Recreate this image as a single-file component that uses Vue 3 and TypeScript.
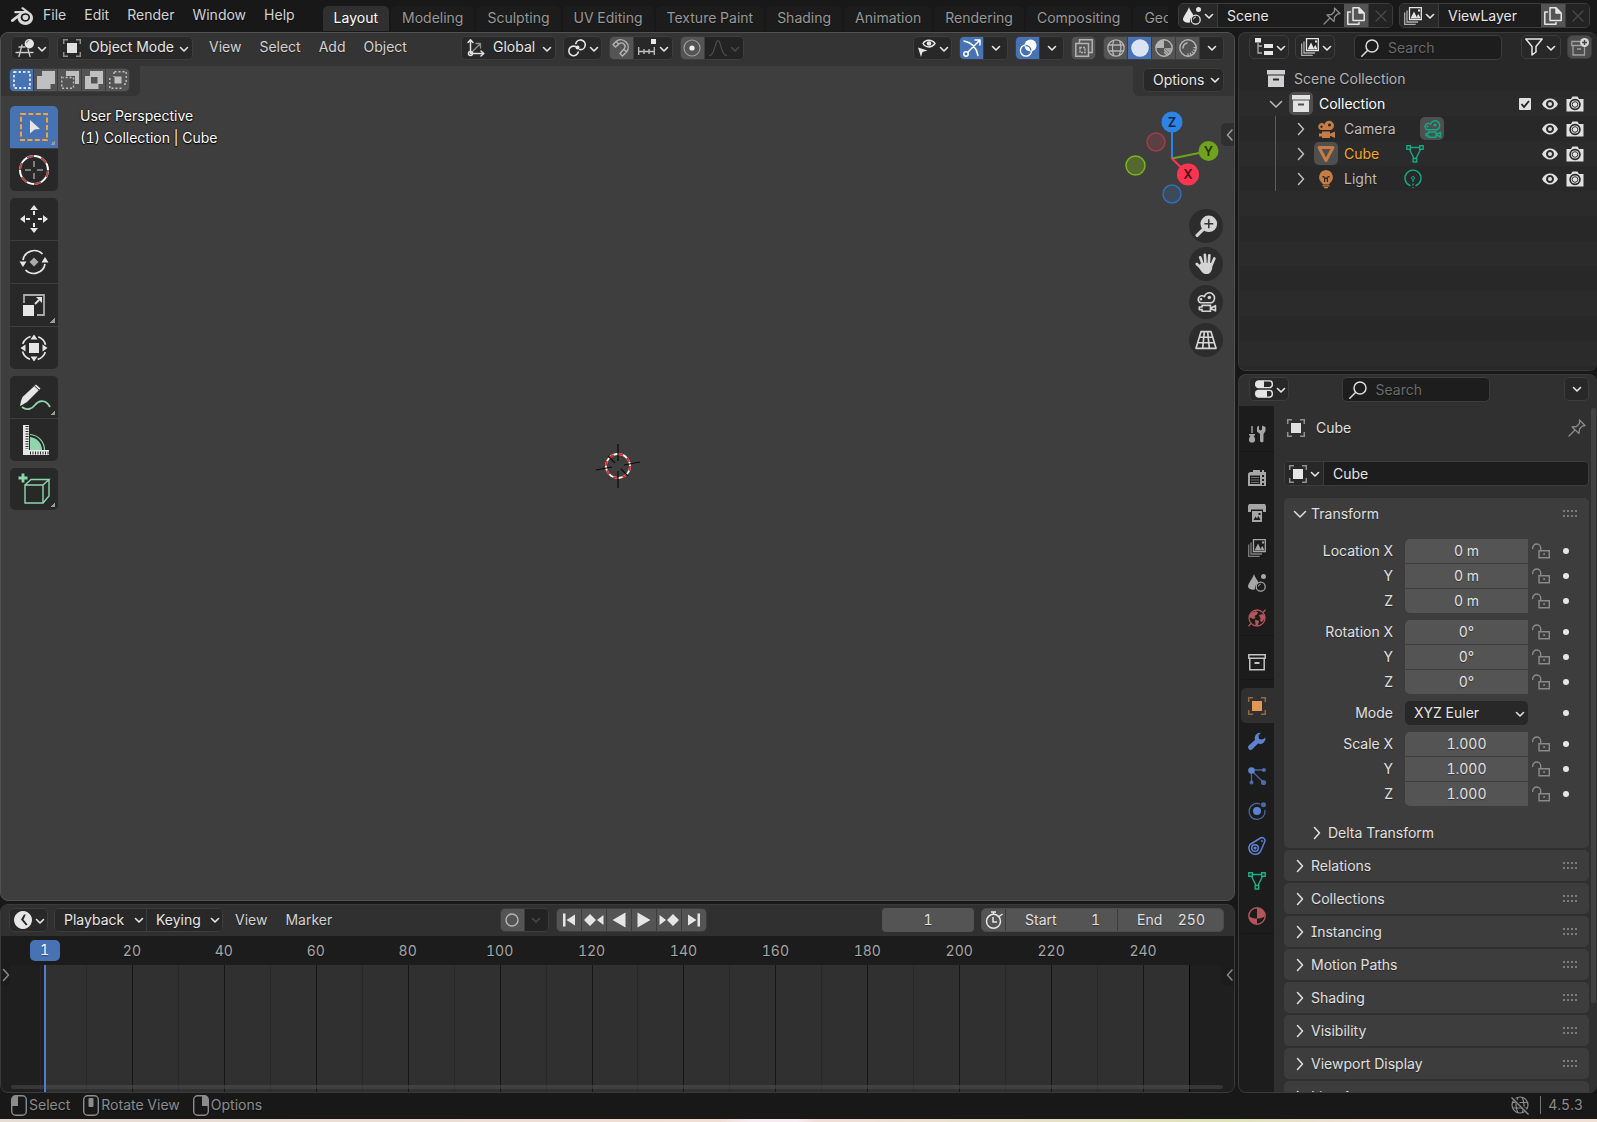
<script setup lang="ts">
import { h, ref, type FunctionalComponent } from 'vue'

const S = 'fill="none" stroke="currentColor" stroke-linecap="round" stroke-linejoin="round"'
const F = 'fill="currentColor"'

const icons: Record<string, string> = {
  logo: `<path transform="scale(.75) translate(0 -1)" ${F} d="M12.51 13.214c.046-.8.438-1.506 1.03-2.006a3.424 3.424 0 0 1 2.212-.79c.85 0 1.631.3 2.211.79.592.5.983 1.206 1.028 2.005.045.823-.285 1.586-.865 2.153a3.389 3.389 0 0 1-2.374.938 3.393 3.393 0 0 1-2.376-.938c-.58-.567-.91-1.33-.865-2.152M7.35 14.831c.006.314.106.922.256 1.398a7.372 7.372 0 0 0 1.593 2.757 8.227 8.227 0 0 0 2.787 2.001 8.947 8.947 0 0 0 3.66.76 8.964 8.964 0 0 0 3.657-.772 8.285 8.285 0 0 0 2.785-2.01 7.428 7.428 0 0 0 1.592-2.762 6.964 6.964 0 0 0 .25-3.074 7.123 7.123 0 0 0-1.016-2.779 7.764 7.764 0 0 0-1.852-2.043h.002L13.566 2.55l-.02-.015c-.492-.378-1.319-.376-1.86.002-.547.382-.609 1.015-.123 1.415l-.001.001 3.126 2.543-9.53.01h-.013c-.788.001-1.545.518-1.695 1.172-.154.665.38 1.217 1.2 1.22V8.9l4.83-.01-8.62 6.617-.034.025c-.813.622-1.075 1.658-.563 2.313.52.667 1.625.668 2.447.004L7.414 14s-.069.52-.063.831zm12.09 1.741c-.97.988-2.326 1.548-3.795 1.55-1.47.004-2.827-.552-3.797-1.538a4.51 4.51 0 0 1-1.036-1.622 4.282 4.282 0 0 1 .282-3.519 4.702 4.702 0 0 1 1.153-1.371c.942-.768 2.141-1.183 3.396-1.185 1.256-.002 2.455.41 3.398 1.175.48.391.87.854 1.152 1.367a4.28 4.28 0 0 1 .522 1.706 4.236 4.236 0 0 1-.239 1.811 4.54 4.54 0 0 1-1.035 1.626"/>`,
  view3d: `<g ${S} stroke-width="1.300" opacity=".85"><path d="M3 8h6M0 13.500h17M6 6 3 17.500M12 10l2 7.500"/></g><circle cx="13.300" cy="4.700" r="4.700" ${F}/><path d="M10.500 4a3 3 0 0 1 2.500-2.500" fill="none" stroke="#777" stroke-width="1"/>`,
  object: `<rect x="4" y="4" width="10" height="10" ${F}/><g fill="none" stroke="currentColor" stroke-width="1.500" opacity=".55"><path d="M.7 5V.7H5M13 .7h4.300V5M17.300 13v4.300H13M5 17.300H.7V13"/></g>`,
  axes: `<g ${S} stroke-width="1.500"><path d="M3.500 1v13.500H16M1 3.500 3.500.8 6 3.500M14 12l2.800 2.500L14 17"/><circle cx="3.500" cy="14.500" r="2"/></g><path ${S} opacity=".55" stroke-width="1.300" d="m5 13 8-8M9 4.500h4.500V9"/>`,
  pivot: `<g fill="none" stroke="currentColor" stroke-width="1.600" stroke-linecap="round"><path d="M7.500 7.500A4.800 4.800 0 1 0 10.300 13"/><path d="M7.800 4.500a4.800 4.800 0 1 1 3.700 6"/></g><circle cx="9.500" cy="8.500" r="2" ${F}/>`,
  magnet: `<path ${S} stroke-width="1.400" d="M1 5.500 4 2.500C11-3 20 6 14.500 13l-4 4-2.500-2.500 4-4.500c3-3.500-1.500-8-5-5L3.500 8ZM4 2.500 6.500 5M14.500 13 12 10.500"/>`,
  snapinc: `<rect x="13" y="0" width="5" height="5" ${F}/><g fill="none" stroke="currentColor" stroke-width="1.300" opacity=".8"><path d="M.7 8v8M16.300 8v8M0 12.500h17M6 10v5M11 10v5"/></g>`,
  prop: `<circle cx="9" cy="9" r="8" fill="none" stroke="currentColor" stroke-width="1.200" opacity=".5"/><circle cx="9" cy="9" r="2.600" fill="#eee"/>`,
  falloff: `<path ${S} stroke-width="1.300" d="M.7 16.500C6 16 6 1.500 9 1.500s3 14.500 8.300 15"/>`,
  eyearrow: `<path ${S} stroke-width="1.500" d="M5 4.500C7.500 0 14 0 17 4.500 14 9 7.500 9 5 4.500Z"/><circle cx="11" cy="4.500" r="2.300" ${F}/><path ${F} d="m0 8.500 9.500 3-5 1.500L3 18Z"/>`,
  gizmo: `<g ${S} stroke-width="1.500"><path d="M1 2c8 1.500 12.500 6.500 14 14.500M5 13 17 1M12 1h5v5"/><circle cx="3" cy="15" r="2.200"/></g>`,
  overlay: `<circle cx="11.500" cy="6.500" r="6" ${F}/><circle cx="7" cy="11.500" r="5.600" fill="none" stroke="currentColor" stroke-width="1.400"/><path d="M6.500 6.500a5.500 5.500 0 0 1 5.500 5" fill="none" stroke="#4772b3" stroke-width="1.300"/>`,
  xray: `<g fill="none" stroke="currentColor" stroke-width="1.500"><path d="M4.500 4V.8h12.700v12.700H14"/><path d="M.8 4.500h12.700v12.700H.8Z" /><path d="M5 8.500h5v5H5Z" stroke-dasharray="2 1"/></g>`,
  wire: `<g fill="none" stroke="currentColor" stroke-width="1.300"><circle cx="9" cy="9" r="8.200"/><path d="M1.500 6h15M1 12h16M7 1C5 5 5 13 7 17M12.500 1.500c2 5 1.500 11-.5 15"/></g>`,
  solid: `<circle cx="9" cy="9" r="8.800" ${F}/>`,
  matprev: `<circle cx="9" cy="9" r="8.200" fill="none" stroke="currentColor" stroke-width="1.400"/><path ${F} d="M9 9H1a8 8 0 0 1 8-8Z"/><path ${F} d="M9 9h8a8 8 0 0 1-2.500 5.500Z" opacity=".8"/><path d="m9 10.500 5 5M9 13l3.500 3.500" stroke="currentColor" stroke-width="1.300"/>`,
  rendered: `<circle cx="9" cy="9" r="8.200" fill="none" stroke="currentColor" stroke-width="1.400"/><path ${S} stroke-width="1.600" d="M4 9a5.500 5.500 0 0 1 4-5"/><path d="M16 8a8 8 0 0 1-8 8" fill="none" stroke="currentColor" stroke-width="3" stroke-dasharray="1.200 1.500"/>`,
  scene: `<path ${F} d="M6 0c1 4 4.500 7 4.500 9A6 6 0 0 0 7 15.500C3.500 16 0 15 0 12.500 0 9.500 4.500 5 6 0Z"/><circle cx="15.500" cy="2.500" r="2.500" ${F}/><circle cx="12.700" cy="12.700" r="4.500" fill="none" stroke="currentColor" stroke-width="1.300"/><path d="M10.500 12a2.500 2.500 0 0 1 2-2" ${S}/>`,
  layer: `<g fill="none" stroke="currentColor" stroke-width="1.300"><path d="M5.500.7h11.800v12H5.500Z"/><path d="M3 3.500V15h11M.7 5.500v11.800h11" opacity=".7"/></g><path ${F} d="M6.500 11.500 10 4.500l3.500 7ZM13 9l1.500-2 2 4.500h-3ZM14 2.500h2v2h-2Z"/>`,
  pin: `<path ${S} stroke-width="1.300" d="m11.500 1 5.500 5.500-2.500.5-3 3-.5 4.500L4 8l4.500-.5 3-3ZM7 11 1 17"/>`,
  copy: `<path ${S} stroke-width="1.500" d="M6 .8h6L17.200 6v7.500H6ZM12 .8V6h5.200M3.500 5H.8v12.200H12V15.500"/><path ${F} d="M12 1v5h5Z"/>`,
  close: `<path ${S} stroke-width="1.200" d="m4 4 10 10M14 4 4 14"/>`,
  outliner: `<path ${F} d="M0 0h6v4.500H0ZM9 6h9v4H9ZM9 13h9v4H9Z"/><path d="M3 5v10h4M3 8h4" fill="none" stroke="currentColor" stroke-width="1.300" opacity=".7"/>`,
  search: `<g ${S} stroke-width="1.500"><circle cx="11" cy="7" r="6"/><path d="M6.500 11.500.8 17.200"/></g>`,
  filter: `<path ${S} stroke-width="1.500" d="M.8 1h16.400L11 8.500V14l-4 3V8.500Z"/>`,
  newcol: `<path fill="none" stroke="currentColor" stroke-width="1.300" opacity=".6" d="M9 3.500H.8v4h10M2 7.500V17h11.500V9"/><path d="M6 11h4" stroke="currentColor" stroke-width="1.500" opacity=".6"/><circle cx="13.500" cy="4.500" r="4.500" ${F}/><path d="M13.500 2v5M11 4.500h5" stroke="#444" stroke-width="1.400"/>`,
  box: `<path ${F} fill-rule="evenodd" d="M0 0h18v4.500H0ZM1 5.500h16V17H1ZM6 8.500v2h6v-2Z"/>`,
  boxline: `<g fill="none" stroke="currentColor" stroke-width="1.500"><path d="M.8 1.800h16.400v3.500H.8ZM1.800 5.300h14.400v11.400H1.800Z"/></g><rect x="6.500" y="9" width="5" height="2" ${F}/>`,
  movie: `<path ${F} fill-rule="evenodd" d="M4 10A3.500 3.500 0 1 1 7.500 4.500 4.800 4.800 0 1 1 14 10ZM12.500 3.500a1.500 1.500 0 1 0 .01 0ZM4.500 5.500a1.200 1.200 0 1 0 .01 0Z"/><path ${F} d="M5 11.500h8v2.300l5-2.300v6.500l-5-2.300V18H5v-1.500H2v-3h3Z"/>`,
  movieline: `<g ${S} stroke-width="1.500"><path d="M4 9.700A3.300 3.300 0 1 1 7.500 4.200 4.700 4.700 0 1 1 14 9.700Z"/><path d="M5.500 12h7.500v5.300H5.500v-1.500H3v-2.300h2.500ZM13 14.600l4.500-2.300v4.700Z"/></g><circle cx="4.500" cy="6.500" r="1.100" ${F}/><circle cx="12" cy="5" r="1.600" ${F}/>`,
  mesh: `<path fill="none" stroke="currentColor" stroke-width="3" stroke-linejoin="round" d="M2 2.500h14L9 15.500Z"/>`,
  meshdata: `<g fill="none" stroke="currentColor" stroke-width="1.400"><path d="M4.500 2.500h9M3.500 4.500 7.800 13M14.500 4.500 10.200 13M.8.8h3.500v3.500H.8ZM13.700.8h3.500v3.500h-3.500ZM7.200 13.500h3.500V17H7.200Z"/></g>`,
  bulb: `<path ${F} fill-rule="evenodd" d="M9 0a7.200 7.200 0 0 1 4.500 12.500L12 14.500H6l-1.500-2A7.200 7.200 0 0 1 9 0ZM5.500 6v1.500H7V12h1.200V9h1.600v3H11V7.500h1.500V6h-2v1.500h-3V6Z"/><path ${F} d="M5.500 15.200h7v1.200h-7ZM7 17h4v1.200H7Z"/>`,
  lightdata: `<path ${S} stroke-width="1.400" d="M6 15.500A8 8 0 1 1 12 15.500"/><circle cx="9" cy="8" r="1.500" fill="none" stroke="currentColor"/><path d="M9 10v8" stroke="currentColor" stroke-width="1.300" stroke-dasharray="2 1.500"/>`,
  eye: `<path ${F} fill-rule="evenodd" d="M1 9c3.500-7.300 12.500-7.300 16 0-3.500 7.300-12.500 7.300-16 0ZM9 5a4 4 0 1 0 .01 0Z"/><circle cx="9" cy="9" r="2" ${F}/>`,
  photo: `<path ${F} fill-rule="evenodd" d="M.5 4H5l1.500-2.500h5L13 4h4.500v12.500H.5ZM9 3.800a5.700 5.700 0 1 0 .01 0Z"/><circle cx="9" cy="9.500" r="4" ${F}/><circle cx="9" cy="9.500" r="2.800" fill="none" stroke="#333" stroke-width="1"/>`,
  props: `<g fill="none" stroke="currentColor" stroke-width="1.400"><rect x=".7" y=".9" width="16.600" height="6.700" rx="3"/><rect x=".7" y="10.400" width="16.600" height="6.700" rx="3"/></g><path ${F} d="M3 1h6v6.500H3L.8 5.500V3ZM3 10.500h9V17H3l-2.200-2v-2.500Z"/>`,
  tool: `<path ${F} d="M3.300 1h1.400v7H3.300ZM1 9h6v1.500H5.500l1.500 3v2.500L5.500 17.500h-3L1 16v-2.500l1.500-3H1ZM9 2l2-1.500v4l1.500 1 1.500-1v-4L17.500 2v4L15.500 9v7.500l-1.500 1-2-1V9L9 6.500Z"/>`,
  render: `<path ${F} fill-rule="evenodd" d="M5 3V1h7v2h2V1h2v2h2v14H0V4.500L2 3ZM2 6.500v8.500h10V6.500ZM14 6h2v2h-2ZM14 10h2v2h-2ZM14 14h2v2h-2Z"/><path d="M3 8.500h8M3 11h8M3 13.500h8" stroke="currentColor" opacity=".6"/>`,
  output: `<path ${F} fill-rule="evenodd" d="M1 0h16l1 2v6h-3V5.500H3V8H0V2ZM4 7h10v11H4ZM5.500 16h7L10.500 12 9 14.500 7.500 12.500ZM10.500 9v2h2V9Z"/>`,
  world: `<circle cx="9" cy="9" r="8" fill="none" stroke="currentColor" stroke-width="1.300"/><path ${F} d="M3 4 8 2l2 1.500-1 2L6.500 7l1 2-2.500 1L1 8ZM11 6l4-1 2 4-3 4-2-1 .5-2.500ZM7 10.500l4 1.500-1 4.500-2.500-.5Z"/><path d="M15 3.500 17.500.8M3 14.500.5 17.200" stroke="currentColor" stroke-width="1.300"/>`,
  wrench: `<path ${F} d="M17.500 5.500a5.500 5.500 0 0 1-7.500 6l-5.500 5.500a2.500 2.500 0 0 1-3.800-3.500L7 8A5.500 5.500 0 0 1 13 .7L10.500 3.500 11 7l3.500.5Z"/>`,
  particles: `<g stroke="currentColor" opacity=".7"><path d="M4 3h12M3.500 4v11M4 4l11 11" stroke-width="1.300"/></g><circle cx="3.500" cy="3.500" r="3.300" ${F}/><g ${F} opacity=".75"><circle cx="16" cy="3" r="2"/><circle cx="3.500" cy="15.500" r="2"/><circle cx="15.500" cy="15.500" r="2.600"/></g>`,
  physics: `<path ${S} stroke-width="1.300" opacity=".75" d="M12 2A8 8 0 1 0 17 8.500"/><circle cx="15.500" cy="2.800" r="2.500" ${F} opacity=".75"/><circle cx="9" cy="9" r="4" ${F}/>`,
  constraint: `<g fill="none" stroke="currentColor" stroke-width="1.500"><path d="M2 7.500 12.500 1a3 3 0 0 1 4.500 3l-4.500 10.500A6.300 6.300 0 1 1 2 7.500Z"/><circle cx="7" cy="11" r="3.300"/></g><circle cx="7" cy="11" r="1.600" ${F}/><circle cx="14" cy="4" r="1" ${F}/>`,
  material: `<circle cx="9" cy="9" r="8.200" fill="none" stroke="currentColor" stroke-width="1.400"/><path ${F} d="M9 1a8 8 0 0 1 8 8c-2 2-5 2.500-8 2.500ZM1 9c2 2 5 2.500 8 2.500V17A8 8 0 0 1 1 9Z"/>`,
  lock: `<g fill="none" stroke="currentColor" stroke-width="1.400"><path d="M7 8.700h10.300v7H7Z"/><path stroke-linecap="round" d="M.7 6.500V6a4 4 0 0 1 8 0v2.500"/></g><path d="M12.100 11v2" stroke="currentColor" stroke-width="1.500"/>`,
  clock: `<path ${F} fill-rule="evenodd" d="M9 0a9 9 0 1 0 .01 0ZM10 3.500h1.800L9.500 8.500l4 5-1.500 1L7 8.500Z"/>`,
  record: `<circle cx="9" cy="9" r="6" fill="none" stroke="currentColor" stroke-width="1.400"/>`,
  first: `<path ${F} d="M3 2.500h2.500v13H3ZM6.500 9 15 3.500v11Z"/>`,
  prevkey: `<path ${F} d="M-1 9 5 3l6 6-6 6ZM12 9l6.500-5v10Z"/>`,
  back: `<path ${F} d="M2.500 9 15.500 1.500v15Z"/>`,
  play: `<path ${F} d="M15.500 9 2.500 1.500v15Z"/>`,
  nextkey: `<path ${F} d="M19 9 13 3 7 9l6 6ZM6 9-.5 4v10Z"/>`,
  last: `<path ${F} d="M12.500 2.500H15v13h-2.500ZM11.500 9 3 3.500v11Z"/>`,
  stopwatch: `<g fill="none" stroke="currentColor" stroke-width="1.500"><circle cx="8.500" cy="10.300" r="7"/><path d="M6 .9h5M8.500 1v2.500M14 5.500 17.500 3M8 6v5h4"/></g>`,
  offline: `<g fill="none" stroke="currentColor" stroke-width="1.200"><circle cx="9" cy="9" r="8"/><path d="M1.500 6.500h15M1.500 12h15M7 1.200C4.500 6 4.500 12 7 17M11 1.200c2.500 4.800 2.500 11 0 15.800"/></g><path d="m1 1 17 17" stroke="#181818" stroke-width="3"/><path d="m.5 1.500 17 17" stroke="currentColor" stroke-width="1.500"/>`,
  selset: `<rect x="1" y="1" width="16" height="16" fill="none" stroke="#fff" stroke-width="1.500" stroke-dasharray="2.500 2"/>`,
  selext: `<path ${F} d="M5 0h13v13h-4.500v5H0V5h5Z"/>`,
  selsub: `<path ${F} d="M5 0h13v13h-4V5H5Z"/><path d="M.8 5.500v11.700h11.700V6.500H2" fill="none" stroke="currentColor" stroke-width="1.400" stroke-dasharray="2 2"/>`,
  selxor: `<path ${F} fill-rule="evenodd" d="M5 0h13v13h-4.500v5H0V5h5ZM6 6v6.500h6.500V6Z"/>`,
  seland: `<path d="M5.500.8h11.700v11.700M12.500 17.200H.8V5.500M5 1v5M17 13h-4" fill="none" stroke="currentColor" stroke-width="1.400" stroke-dasharray="2 2"/><rect x="5.500" y="5.500" width="7" height="7" ${F}/>`,
  down: `<path ${S} stroke-width="1.600" d="m5.500 7.500 3.500 3.500 3.500-3.500"/>`,
  left: `<path ${S} stroke-width="1.500" d="M11 4 6.500 9l4.500 5"/>`,
  right: `<path ${S} stroke-width="1.500" d="m6.500 3.500 5 5.500-5 5.500"/>`,
  open: `<path ${S} stroke-width="1.500" d="m3.500 6.500 5.500 5.500 5.500-5.500"/>`,
  check: `<rect x="3" y="3" width="12" height="12" rx="1" ${F}/><path d="m5.500 9 2.500 3 5-6" fill="none" stroke="#222" stroke-width="1.800"/>`,
  zoom: `<circle cx="11.500" cy="7" r="7.500" ${F}/><path d="M6 12.500 1 17.500" stroke="currentColor" stroke-width="3" stroke-linecap="round"/><path d="M11.500 3v8M7.500 7h8" stroke="#333" stroke-width="1.400"/>`,
  hand: `<g ${S} stroke-width="2.400"><path d="M6 9 3.800 3M8.500 8 8 .8M11.500 8.500 12 1.200M14 10l2.500-6M6 14 .7 9"/></g><path ${F} d="M4.500 8 15 8l-.5 5c-.8 3-2 5-5 5S5 16.500 2 11Z"/>`,
  grid: `<path ${S} stroke-width="1.500" d="M4.500 1.500h9L18 16.500H0ZM3 6.500h12M1.500 11.500h15M7.500 1.500l-1.500 15M10.500 1.500l1.500 15"/>`,
  tselect: `<rect x="3" y="3" width="26" height="26" fill="none" stroke="#f0a632" stroke-width="2" stroke-dasharray="5 2.400"/><path fill="#e6e6e6" d="m12 9 10 9-5.500.5-4.500 4Z"/>`,
  tcursor: `<circle cx="16" cy="16" r="14" fill="none" stroke="#fff" stroke-width="2"/><circle cx="16" cy="16" r="14" fill="none" stroke="#a8484d" stroke-width="2" stroke-dasharray="7.300 7.300"/><path d="M16 7v6M16 19v6M7 16h6M19 16h6" stroke="#999" stroke-width="1.500"/>`,
  tmove: `<g ${F}><path d="M16 2l4 5h-8ZM16 30l4-5h-8ZM2 16l5-4v8ZM30 16l-5-4v8Z"/></g><path d="M16 8v4M16 20v4M8 16h4M20 16h4" stroke="currentColor" stroke-width="2"/>`,
  trotate: `<path fill="none" stroke="currentColor" stroke-width="1.700" d="M5 14A11.500 11.500 0 0 1 24.500 8M27 18A11.500 11.500 0 0 1 7.500 24"/><path ${F} d="M1.500 15.500h7L5 21ZM23.500 16.500h7L27 11Z"/><path d="m16 11.500 4.500 4.500-4.500 4.500-4.500-4.500Z" fill="#aaa"/>`,
  tscale: `<path fill="none" stroke="#aaa" stroke-width="1.800" d="M6 14V6h20v20H19"/><rect x="5" y="16" width="11" height="11" ${F}/><path d="m17 15 4-4" stroke="currentColor" stroke-width="1.800"/><path ${F} d="M24 8v6l-6-6Z"/>`,
  ttransform: `<circle cx="16" cy="16" r="12" fill="none" stroke="currentColor" stroke-width="1.700" stroke-dasharray="11 7.850" stroke-dashoffset="-4"/><rect x="11" y="11" width="10" height="10" ${F}/><path ${F} d="M16 2.500l3.500 5h-7ZM16 29.500l3.500-5h-7ZM2.500 16l5-3.500v7ZM29.500 16l-5-3.500v7Z"/>`,
  tannotate: `<path fill="none" stroke="#8fd6ae" stroke-width="1.800" d="M4 26c5 4 10 2 13-2s10-7 15 2"/><path ${F} d="m3 20 1.500-4L18 3.500l4.500 4L9 21l-5 3-2 1Z"/><path d="m16.500 5 4.500 4" stroke="#282828"/>`,
  tmeasure: `<path ${F} d="M5 1h6v25h20v5H5Z"/><path d="M9 2v23" stroke="#282828" stroke-width="3" stroke-dasharray="1 1.500"/><path d="M12 29h19" stroke="#282828" stroke-width="3" stroke-dasharray="1 1.500"/><path d="M12 13a13 13 0 0 1 12 13H12Z" fill="#8fd6ae"/><path d="M12 10.500A15.500 15.500 0 0 1 26.500 26" fill="none" stroke="#8fd6ae" stroke-width="1.200"/>`,
  tcube: `<path d="M5 .5v9M.5 5h9" stroke="#8fd6ae" stroke-width="2.800"/><path fill="none" stroke="#8fd6ae" stroke-width="1.400" d="M7 12h18v18H7ZM7 12l6-5.500h18L25 12M31 6.500V23l-6 7"/>`
}

const Icon: FunctionalComponent<{ n: string; s?: number; box?: number }> = (p) =>
  h('svg', {
    class: 'ico',
    width: p.s ?? 18,
    height: p.s ?? 18,
    viewBox: `0 0 ${p.box ?? 18} ${p.box ?? 18}`,
    'aria-hidden': 'true',
    innerHTML: icons[p.n]
  })
Icon.props = ['n', 's', 'box']

const menus = ['File', 'Edit', 'Render', 'Window', 'Help']
const workspaces = ['Layout', 'Modeling', 'Sculpting', 'UV Editing', 'Texture Paint', 'Shading', 'Animation', 'Rendering', 'Compositing', 'Geometry Nodes']
const activeWorkspace = ref('Layout')

const selectModes = ['selset', 'selext', 'selsub', 'selxor', 'seland']
const toolGroups = [
  [{ n: 'tselect', t: 'Select Box', more: true }, { n: 'tcursor', t: 'Cursor', more: false }],
  [{ n: 'tmove', t: 'Move', more: false }, { n: 'trotate', t: 'Rotate', more: false }, { n: 'tscale', t: 'Scale', more: true }, { n: 'ttransform', t: 'Transform', more: false }],
  [{ n: 'tannotate', t: 'Annotate', more: true }, { n: 'tmeasure', t: 'Measure', more: false }],
  [{ n: 'tcube', t: 'Add Cube', more: true }]
]
const shading = ['wire', 'solid', 'matprev', 'rendered']
const transport = ['first', 'prevkey', 'back', 'play', 'nextkey', 'last']
const nav = ['zoom', 'hand', 'movieline', 'grid']

const objects = [
  { name: 'Camera', icon: 'movie', data: 'movieline', active: false, tile: true },
  { name: 'Cube', icon: 'mesh', data: 'meshdata', active: true, tile: false },
  { name: 'Light', icon: 'bulb', data: 'lightdata', active: false, tile: false }
]

const tabGroups = [
  [{ n: 'tool', c: '#a6a6a6' }],
  [{ n: 'render', c: '#a6a6a6' }, { n: 'output', c: '#a6a6a6' }, { n: 'layer', c: '#a6a6a6' }, { n: 'scene', c: '#a6a6a6' }, { n: 'world', c: '#b3555a' }],
  [{ n: 'boxline', c: '#c4c4c4' }],
  [{ n: 'object', c: '#e39752' }, { n: 'wrench', c: '#5c83cf' }, { n: 'particles', c: '#5c83cf' }, { n: 'physics', c: '#5c83cf' }, { n: 'constraint', c: '#5c83cf' }, { n: 'meshdata', c: '#1ab088' }, { n: 'material', c: '#b3555a' }]
]

const vectors = ref([
  { name: 'Location', values: ['0 m', '0 m', '0 m'] },
  { name: 'Rotation', values: ['0°', '0°', '0°'] },
  { name: 'Scale', values: ['1.000', '1.000', '1.000'] }
])
const axes = ['X', 'Y', 'Z']
const panels = ['Relations', 'Collections', 'Instancing', 'Motion Paths', 'Shading', 'Visibility', 'Viewport Display', 'Line Art']

// Timeline range: the strip shows frames from about -9 to 260.
const pct = (frame: number) => `${((39 + frame * 4.596) / 1233) * 100}%`
const lines = Array.from({ length: 25 }, (_, i) => i * 10)
const labels = Array.from({ length: 12 }, (_, i) => (i + 1) * 20)
</script>

<template>
  <div class="app">
    <header class="topbar">
      <Icon n="logo" :s="22" class="logo" />
      <nav class="menus">
        <button v-for="m in menus" :key="m" class="menu">{{ m }}</button>
      </nav>
      <div class="workspaces">
        <button v-for="w in workspaces" :key="w" class="ws" :class="{ on: w === activeWorkspace }" @click="activeWorkspace = w">{{ w }}</button>
      </div>
      <div class="idblock">
        <button class="seg drop" aria-label="Browse scene"><Icon n="scene" /><Icon n="down" class="chev" /></button>
        <input class="idname scene" value="Scene" aria-label="Scene" />
        <button class="seg bare" aria-label="Pin"><Icon n="pin" /></button>
        <button class="seg lit" aria-label="New scene"><Icon n="copy" /></button>
        <button class="seg off" aria-label="Remove scene"><Icon n="close" /></button>
      </div>
      <div class="idblock last">
        <button class="seg drop" aria-label="Browse view layer"><Icon n="layer" /><Icon n="down" class="chev" /></button>
        <input class="idname" value="ViewLayer" aria-label="View layer" />
        <button class="seg lit" aria-label="New view layer"><Icon n="copy" /></button>
        <button class="seg off" aria-label="Remove view layer"><Icon n="close" /></button>
      </div>
    </header>

    <main class="main">
      <div class="col">
        <section class="area viewport">
          <div class="vhead">
            <button class="btn drop" aria-label="Editor type"><Icon n="view3d" /><Icon n="down" class="chev" /></button>
            <label class="sel mode"><select aria-label="Mode"><option>Object Mode</option></select><Icon n="object" /><Icon n="down" class="chev" /></label>
            <nav class="menus">
              <button v-for="m in ['View', 'Select', 'Add', 'Object']" :key="m" class="menu">{{ m }}</button>
            </nav>
            <label class="sel orient"><select aria-label="Orientation"><option>Global</option></select><Icon n="axes" /><Icon n="down" class="chev" /></label>
            <button class="btn drop" aria-label="Pivot"><Icon n="pivot" /><Icon n="down" class="chev" /></button>
            <div class="group">
              <button class="seg lit dim" aria-label="Snap"><Icon n="magnet" /></button>
              <button class="seg drop" aria-label="Snap to"><Icon n="snapinc" /><Icon n="down" class="chev" /></button>
            </div>
            <div class="group">
              <button class="seg lit" aria-label="Proportional editing"><Icon n="prop" /></button>
              <button class="seg drop off" aria-label="Falloff"><Icon n="falloff" /><Icon n="down" class="chev" /></button>
            </div>
            <span class="push"></span>
            <button class="btn drop" aria-label="Visibility"><Icon n="eyearrow" /><Icon n="down" class="chev" /></button>
            <div class="group">
              <button class="seg blue" aria-label="Gizmos"><Icon n="gizmo" /></button>
              <button class="seg" aria-label="Gizmo options"><Icon n="down" /></button>
            </div>
            <div class="group">
              <button class="seg blue" aria-label="Overlays"><Icon n="overlay" /></button>
              <button class="seg" aria-label="Overlay options"><Icon n="down" /></button>
            </div>
            <div class="group"><button class="seg lit dim" aria-label="X-ray"><Icon n="xray" /></button></div>
            <div class="group">
              <button v-for="s in shading" :key="s" class="seg lit dim" :class="{ blue: s === 'solid' }" :aria-label="s"><Icon :n="s" /></button>
              <button class="seg" aria-label="Shading options"><Icon n="down" /></button>
            </div>
          </div>
          <div class="thead">
            <div class="tleft">
              <div class="group modes">
                <button v-for="(s, i) in selectModes" :key="s" class="seg lit" :class="{ blue: i === 0 }" :aria-label="s"><Icon :n="s" /></button>
              </div>
            </div>
            <div class="tright"><button class="btn options">Options<Icon n="down" class="chev" /></button></div>
          </div>
          <div class="canvas">
            <div class="tools">
              <div v-for="(g, i) in toolGroups" :key="i" class="tgroup">
                <button v-for="t in g" :key="t.n" class="toolbtn" :class="{ on: t.n === 'tselect', more: t.more }" :aria-label="t.t"><Icon :n="t.n" :s="32" :box="32" /></button>
              </div>
            </div>
            <p class="info">User Perspective<br />(1) Collection | Cube</p>
            <svg class="cursor3d" width="48" height="48" viewBox="0 0 48 48" aria-hidden="true">
              <circle cx="24" cy="24" r="12" fill="none" stroke="#fff" stroke-width="1.800" />
              <circle cx="24" cy="24" r="12" fill="none" stroke="#f01d1d" stroke-width="1.800" stroke-dasharray="4.712 4.712" />
              <path d="M24 2v17M24 29v17M2 28l16-3M30 23l16-3M14 14l7 7M27 27l7 7" stroke="#0c0c0c" stroke-width="1.200" />
            </svg>
            <div class="right">
              <svg class="axis" width="94" height="94" viewBox="0 0 94 94" aria-hidden="true">
                <circle cx="30" cy="31" r="9" fill="#5a3f43" stroke="#a13c4b" stroke-width="1.500" />
                <circle cx="46" cy="83" r="9" fill="#3c4a5c" stroke="#336fb5" stroke-width="1.500" />
                <circle cx="9.500" cy="54.500" r="9.500" fill="#55682f" stroke="#7bb51b" stroke-width="1.500" />
                <path d="M46 48V12" stroke="#2e83e6" stroke-width="2" />
                <path d="m46 47.500 37-7.500" stroke="#6fa31b" stroke-width="2" />
                <path d="m46 47.500 16 16" stroke="#fd3553" stroke-width="2" />
                <circle cx="46" cy="11" r="10.500" fill="#2e83e6" /><circle cx="82.500" cy="40" r="10" fill="#6fa31b" /><circle cx="62" cy="63.500" r="11" fill="#fd3553" />
                <g text-anchor="middle" font-size="13" font-weight="600"><text x="46" y="16" fill="#0d2748">Z</text><text x="82.500" y="45" fill="#213207">Y</text><text x="62" y="68" fill="#4a0d17">X</text></g>
              </svg>
              <div class="navs">
                <button v-for="n in nav" :key="n" class="navbtn" :aria-label="n"><Icon :n="n" :s="20" /></button>
              </div>
            </div>
            <button class="flap vp" aria-label="Show sidebar"><Icon n="left" /></button>
          </div>
        </section>

        <section class="area timeline">
          <div class="lhead">
            <button class="btn drop" aria-label="Editor type"><Icon n="clock" /><Icon n="down" class="chev" /></button>
            <div class="group pk">
              <button class="seg wide">Playback<Icon n="down" class="chev" /></button>
              <button class="seg wide">Keying<Icon n="down" class="chev" /></button>
            </div>
            <nav class="menus">
              <button class="menu">View</button><button class="menu">Marker</button>
            </nav>
            <span class="push before"></span>
            <div class="group">
              <button class="seg lit dim" aria-label="Auto keying"><Icon n="record" /></button>
              <button class="seg off" aria-label="Auto keying options"><Icon n="down" /></button>
            </div>
            <div class="group play">
              <button v-for="t in transport" :key="t" class="seg lit" :aria-label="t"><Icon :n="t" /></button>
            </div>
            <span class="push after"></span>
            <input class="num frame" value="1" aria-label="Current frame" />
            <div class="group range">
              <button class="seg lit" aria-label="Preview range"><Icon n="stopwatch" /></button>
              <label class="numl start"><span>Start</span><input value="1" /></label>
              <label class="numl end"><span>End</span><input value="250" /></label>
            </div>
          </div>
          <div class="ruler">
            <span v-for="l in labels" :key="l" class="tick" :style="{ left: pct(l) }">{{ l }}</span>
            <span class="tick now" :style="{ left: pct(1) }">1</span>
          </div>
          <div class="track">
            <i class="range-on" :style="{ left: pct(1), right: `calc(100% - ${pct(250)})` }"></i>
            <i v-for="l in lines" :key="l" class="line" :class="{ major: l % 20 === 0 && l > 0 }" :style="{ left: pct(l) }"></i>
            <i class="line endline" :style="{ left: pct(250) }"></i>
            <i class="hscroll"></i>
            <i class="playhead" :style="{ left: pct(1) }"></i>
            <button class="flap lf" aria-label="Show channels"><Icon n="right" /></button>
            <button class="flap rt" aria-label="Show sidebar"><Icon n="left" /></button>
          </div>
        </section>
      </div>

      <aside class="side">
        <section class="area outliner">
          <div class="ohead">
            <button class="btn drop" aria-label="Editor type"><Icon n="outliner" /><Icon n="down" class="chev" /></button>
            <button class="btn drop" aria-label="Display mode"><Icon n="layer" /><Icon n="down" class="chev" /></button>
            <label class="find"><Icon n="search" /><input type="search" placeholder="Search" aria-label="Search outliner" /></label>
            <button class="btn drop filter" aria-label="Filter"><Icon n="filter" /><Icon n="down" class="chev" /></button>
            <div class="group"><button class="seg lit" aria-label="New collection"><Icon n="newcol" /></button></div>
          </div>
          <ul class="tree">
            <li class="row root"><Icon n="box" /><span class="nm">Scene Collection</span></li>
            <li class="row coll">
              <Icon n="open" /><span class="tile"><Icon n="box" /></span><span class="nm white">Collection</span>
              <span class="acts"><Icon n="check" /><Icon n="eye" /><Icon n="photo" /></span>
            </li>
            <li v-for="o in objects" :key="o.name" class="row obj">
              <Icon n="right" /><span class="tile orange" :class="{ bare: !o.active }"><Icon :n="o.icon" /></span>
              <span class="nm" :class="{ picked: o.active }">{{ o.name }}</span>
              <span class="tile green" :class="{ bare: !o.tile }"><Icon :n="o.data" /></span>
              <span class="acts"><Icon n="eye" /><Icon n="photo" /></span>
            </li>
          </ul>
        </section>

        <section class="area props">
          <div class="phead">
            <button class="btn drop" aria-label="Editor type"><Icon n="props" /><Icon n="down" class="chev" /></button>
            <label class="find"><Icon n="search" /><input type="search" placeholder="Search" aria-label="Search properties" /></label>
            <button class="btn sq" aria-label="Options"><Icon n="down" /></button>
          </div>
          <div class="pbody">
            <nav class="ptabs">
              <div v-for="(g, i) in tabGroups" :key="i" class="pgroup">
                <button v-for="t in g" :key="t.n" class="ptab" :class="{ on: t.n === 'object' }" :style="{ color: t.c }" :aria-label="t.n"><Icon :n="t.n" /></button>
              </div>
            </nav>
            <div class="pcontent">
              <div class="crumb"><Icon n="object" /><span>Cube</span><button class="seg bare" aria-label="Pin"><Icon n="pin" /></button></div>
              <div class="idblock obname">
                <button class="seg drop" aria-label="Browse object"><Icon n="object" /><Icon n="down" class="chev" /></button>
                <input class="idname" value="Cube" aria-label="Name" />
              </div>
              <section class="panel first">
                <h2 class="ptitle"><Icon n="open" />Transform<i class="grip"></i></h2>
                <template v-for="v in vectors" :key="v.name">
                  <div v-if="v.name === 'Scale'" class="vec">
                    <div class="prow">
                      <label for="rotmode">Mode</label>
                      <span class="sel rot"><select id="rotmode"><option>XYZ Euler</option></select><Icon n="down" class="chev" /></span>
                      <span></span><i class="dot"></i>
                    </div>
                  </div>
                  <div class="vec">
                    <div v-for="(a, i) in axes" :key="a" class="prow">
                      <label :for="v.name + a">{{ i === 0 ? v.name + ' ' : '' }}{{ a }}</label>
                      <input :id="v.name + a" v-model="v.values[i]" class="num" />
                      <button class="seg bare" aria-label="Lock"><Icon n="lock" /></button><i class="dot"></i>
                    </div>
                  </div>
                </template>
                <h3 class="sub"><Icon n="right" />Delta Transform</h3>
              </section>
              <section v-for="p in panels" :key="p" class="panel">
                <h2 class="ptitle"><Icon n="right" />{{ p }}<i class="grip"></i></h2>
              </section>
            </div>
            <i class="vscroll"></i>
          </div>
        </section>
      </aside>
    </main>

    <footer class="status">
      <span class="hint"><svg width="16" height="21" viewBox="0 0 16 21" stroke-width="1.400" aria-hidden="true"><rect x=".7" y=".7" width="14.600" height="19.600" rx="4" /><path class="f" d="M1 11V4q0-3 3-3h3v10Z" /></svg>Select</span>
      <span class="hint"><svg width="16" height="21" viewBox="0 0 16 21" stroke-width="1.400" aria-hidden="true"><rect x=".7" y=".7" width="14.600" height="19.600" rx="4" /><rect class="f" x="5.500" y="3" width="5" height="9" rx="1" /></svg>Rotate View</span>
      <span class="hint"><svg width="16" height="21" viewBox="0 0 16 21" stroke-width="1.400" aria-hidden="true"><rect x=".7" y=".7" width="14.600" height="19.600" rx="4" /><path class="f" d="M15 11V4q0-3-3-3H9v10Z" /></svg>Options</span>
      <span class="push"></span>
      <Icon n="offline" />
      <span class="bar"></span>
      <span>4.5.3</span>
    </footer>
    <div class="desktop"></div>
  </div>
</template>

<style>
body { background: #181818; }
</style>

<style scoped>
.app { display: flex; flex-direction: column; height: 100vh; overflow: hidden; background: #181818; color: #e0e0e0; font: 14px/18px Inter, "Noto Sans", sans-serif; font-feature-settings: "cv08", "tnum"; text-shadow: 0 1px 1px rgba(0, 0, 0, 0.4); }
.app * { box-sizing: border-box; }
button, input, select { font: inherit; font-feature-settings: inherit; color: inherit; text-shadow: inherit; margin: 0; padding: 0; border: 0; background: none; outline: 0; appearance: none; min-width: 0; }
ul, p, h2, h3 { margin: 0; padding: 0; font: inherit; list-style: none; }
.ico { display: block; flex: none; overflow: visible; }
.push { flex: 1; }
.push.before { flex: 9; }
.push.after { flex: 10; }
.menus { display: flex; }
.menu { padding: 0 9px; height: 24px; color: #d2d2d2; }

.topbar { display: flex; height: 32px; flex: none; padding: 3px 7px 0 11px; }
.topbar .logo { margin-top: 3px; color: #d8d8d8; }
.topbar .menus { margin-left: 1px; }
.workspaces { display: flex; gap: 2px; flex: 1 1 0; min-width: 0; overflow: hidden; margin: 3px 10px 0 19px; }
.ws { flex: none; height: 25px; padding: 0 11px 2px; border-radius: 5px 5px 0 0; background: #1c1c1c; color: #989898; }
.ws.on { background: #303030; color: #fff; }

.idblock, .group { display: flex; height: 24px; border: 1px solid #3d3d3d; border-radius: 5px; overflow: hidden; flex: none; }
.topbar .idblock { background: #1d1d1d; width: 215px; height: 25px; }
.topbar .idblock.last { width: 191px; margin-left: 6px; }
.topbar .seg.lit { width: 25px; }
.idname { flex: 1 1 0; width: 0; padding: 0 9px; background: #1d1d1d; color: #e6e6e6; border-left: 1px solid #3d3d3d; }
.seg { display: flex; align-items: center; justify-content: center; width: 24px; flex: none; background: #282828; color: #e6e6e6; border-right: 1px solid #3d3d3d; }
.seg:last-child { border-right: 0; width: 23px; }
.seg.drop, .btn.drop { width: 38px; padding: 0 4px; justify-content: flex-start; }
.seg.drop { border-right: 0; }
.chev { margin: 0 -3px 0 -1px; }
.drop .chev { margin: 1px -6px 0 -1px; }
.seg.lit { background: #545454; }
.seg.dim { color: #b4b4b4; }
.seg.bare { background: none; border: 0; color: #8a8a8a; }
.seg.off { color: #4a4a4a; background: #232323; }
.seg.blue { background: #4772b3; color: #fff; }
.seg.dim.blue { color: #dbe4f2; }
.btn { display: flex; align-items: center; height: 24px; border: 1px solid #3d3d3d; border-radius: 5px; background: #282828; color: #e6e6e6; flex: none; }
.btn.drop { width: 39px; }

.sel { display: grid; grid-template-columns: 1fr; align-items: center; height: 24px; border: 1px solid #3d3d3d; border-radius: 5px; background: #282828; flex: none; }
.sel > * { grid-area: 1 / 1; }
.sel select { width: 100%; height: 22px; padding: 0 16px 2px 31px; color: #e6e6e6; }
.sel .ico { margin-left: 5px; pointer-events: none; }
.sel .chev { justify-self: end; margin: 1px -1px 0 0; }

.main { display: flex; gap: 3px; flex: 1; min-height: 0; }
.col { display: flex; flex-direction: column; gap: 3px; flex: 1; min-width: 0; }
.side { display: flex; flex-direction: column; gap: 3px; width: 359px; flex: none; }
.area { border: 1px solid #3a3a3a; border-radius: 8px; overflow: hidden; display: flex; flex-direction: column; }

.viewport { flex: 1; min-height: 0; background: #3e3e3e; border-color: #515151; }
.vhead { display: flex; gap: 7px; height: 33px; flex: none; padding: 3px 10px 0; background: #343434; }
.vhead .mode { width: 136px; }
.vhead .menu { padding-bottom: 2px; }
.vhead .orient { width: 95px; margin-left: 38px; }
.thead { display: flex; justify-content: space-between; height: 30px; flex: none; }
.tleft { background: #343434; width: 139px; padding: 2px 0 0 8px; border-radius: 0 0 6px 0; }
.modes { width: 121px; }
.modes .seg { color: #c0c0c0; }
.modes .seg.blue { color: #fff; }
.tright { background: #343434; width: 101px; padding: 2px 10px 0 10px; border-radius: 0 0 0 6px; }
.options { width: 81px; padding-left: 9px; justify-content: space-between; }
.options .chev { margin-right: -1px; }
.canvas { flex: 1; min-height: 0; display: flex; position: relative; padding: 10px 9px 0; }
.tools { display: flex; flex-direction: column; gap: 7px; width: 48px; flex: none; }
.tgroup { display: flex; flex-direction: column; gap: 1px; border-radius: 5px; overflow: hidden; }
.toolbtn { display: grid; place-items: center; height: 42px; background: #282828; color: #e6e6e6; position: relative; }
.toolbtn.on { background: #4772b3; }
.toolbtn.more::after { content: ""; position: absolute; right: 3px; bottom: 3px; width: 5px; height: 5px; background: linear-gradient(135deg, transparent 50%, #999 50%); }
.info { margin: -1px 0 0 22px; line-height: 22px; color: #fff; text-shadow: 0 0 2px #000, 0 1px 1px #000; }
.cursor3d { position: absolute; left: 50%; top: calc(50% - 32px); transform: translate(-50%, -50%); }
.right { margin-left: auto; display: flex; flex-direction: column; align-items: flex-end; gap: 4px; }
.right text { text-shadow: none; }
.axis { overflow: visible; margin: 5px 5px 0 0; }
.navs { display: flex; flex-direction: column; gap: 4px; margin-right: 2px; }
.navbtn { width: 34px; height: 34px; border-radius: 17px; background: #2c2c2c; display: grid; place-items: center; color: #d4d4d4; }
.flap { position: absolute; width: 13px; height: 23px; display: grid; place-items: center; background: #2f2f2f; color: #a0a0a0; }
.flap.vp { right: 0; top: 27px; border-radius: 5px 0 0 5px; }

.timeline { height: 189px; flex: none; background: #303030; }
.lhead { display: flex; gap: 6px; height: 31px; flex: none; padding: 3px 10px 0 8px; background: #303030; }
.pk { height: 24px; }
.seg.wide { width: 92px; padding: 0 1px 0 9px; justify-content: space-between; }
.seg.wide:last-child { width: 75px; }
.lhead .menus { margin-left: -3px; }
.play { margin-left: 1px; }
.play .seg { width: 25px; }
.play .seg:last-child { width: 24px; }
.num { height: 24px; padding-bottom: 1px; text-align: center; background: #545454; border-radius: 4px; }
.frame { width: 92px; }
.range { background: #545454; margin-left: 1px; border-color: #4c4c4c; }
.numl { display: flex; align-items: center; justify-content: space-between; padding: 0 18px 0 19px; }
.numl input { width: 32px; text-align: right; }
.numl.start { width: 112px; padding-right: 17px; border-right: 1px solid #3d3d3d; }
.numl.end { width: 105px; }
.ruler { position: relative; height: 29px; flex: none; background: #1c1c1c; color: #a6a6a6; }
.tick { position: absolute; top: 4px; height: 21px; line-height: 22px; transform: translateX(-50%); }
.tick.now { width: 30px; text-align: center; background: #4772b3; color: #fff; border-radius: 5px; line-height: 20px; }
.track { position: relative; flex: 1; background: #1f1f1f; }
.track i { position: absolute; top: 0; bottom: 0; }
.range-on { background: #303030; }
.line { width: 1px; background: #282828; }
.line.major { background: #161616; }
.line.endline { background: #000; }
.track .hscroll { top: auto; bottom: 3px; height: 4px; left: 10px; right: 11px; border-radius: 2px; background: rgba(80, 80, 80, 0.5); }
.playhead { width: 2px; margin-left: -1px; background: #4f7fc8; }
.timeline .flap { top: -2px; background: #1c1c1c; color: #8a8a8a; }
.flap.lf { left: -4px; border-radius: 0 5px 5px 0; }
.flap.rt { right: 0; border-radius: 5px 0 0 5px; }

.outliner { height: 339px; flex: none; background: #282828; border-right: 0; }
.ohead { display: flex; gap: 6px; height: 33px; flex: none; padding: 2px 5px 0 10px; }
.ohead .btn.drop, .phead .btn.drop { width: 40px; padding-left: 5px; }
.ohead .filter.btn { padding-left: 3px; }
.find { display: flex; align-items: center; gap: 9px; width: 148px; height: 25px; padding: 0 6px; background: #1d1d1d; border: 1px solid #3d3d3d; border-radius: 5px; color: #dcdcdc; }
.find input { flex: 1; }
.find input::placeholder { color: #6a6a6a; opacity: 1; }
.ohead .find { margin-left: 13px; }
.ohead .filter { margin-left: auto; }
.ohead .seg.lit { color: #d8d8d8; background: #4c4c4c; }
.tree { flex: 1; background: repeating-linear-gradient(#282828 0 25px, #2b2b2b 25px 50px); }
.row { display: flex; align-items: center; height: 25px; padding-right: 13px; color: #bdbdbd; }
.row.root { padding-left: 28px; gap: 9px; color: #d0d0d0; }
.row.root .nm { color: #b4b4b4; }
.row.coll { padding-left: 28px; gap: 4px; }
.row.obj { padding-left: 53px; gap: 4px; background: linear-gradient(#5c5c5c 0 0) 36px 0 / 1px 100% no-repeat; }
.tile { display: grid; place-items: center; width: 24px; height: 23px; border-radius: 5px; background: #4f4f4f; color: #e2e2e2; }
.tile.bare { background: none; }
.tile.orange { color: #c67c45; }
.tile.green { color: #12a881; margin-left: 20px; }
.nm { margin-left: 2px; }
.root .nm { margin-left: 0; }
.white { color: #fff; }
.picked { color: #f5a623; }
.acts { display: flex; gap: 7px; margin-left: auto; color: #e0e0e0; }

.props { flex: 1; min-height: 0; background: #303030; border-right: 0; }
.phead { display: flex; justify-content: space-between; height: 31px; flex: none; padding: 2px 8px 0 10px; }
.btn.sq { width: 25px; justify-content: center; }
.phead .find { margin-left: -22px; }
.pbody { display: flex; flex: 1; min-height: 0; }
.ptabs { width: 35px; flex: none; background: #1c1c1c; padding: 10px 0 0 2px; display: flex; flex-direction: column; gap: 9px; }
.pgroup { display: flex; flex-direction: column; box-shadow: 0 1px #161616; }
.ptab { height: 35px; display: flex; align-items: center; padding-left: 7px; border-radius: 5px 0 0 5px; }
.ptab.on { background: #303030; }
.pcontent { flex: 1; min-width: 0; padding: 10px 2px 0 10px; display: flex; flex-direction: column; gap: 2px; overflow: hidden; }
.crumb { display: flex; align-items: center; gap: 11px; height: 24px; padding: 0 1px 0 3px; flex: none; }
.crumb .seg { margin-left: auto; }
.obname { height: 25px; margin-top: 19px; }
.panel { flex: none; background: #3d3d3d; border-radius: 5px; }
.panel.first { margin-top: 10px; }
.ptitle { display: flex; align-items: center; gap: 2px; height: 31px; padding: 0 12px 0 7px; }
.grip { margin-left: auto; width: 14px; height: 7px; background: radial-gradient(circle at 1px 1px, #7c7c7c 1px, transparent 1px) 0 0 / 4px 5px; }
.first .ptitle { margin-bottom: 10px; }
.vec { display: flex; flex-direction: column; gap: 1px; margin-bottom: 7px; }
.prow { display: grid; grid-template-columns: 109px 135px 24px auto; align-items: center; height: 24px; }
.prow label { text-align: right; }
.prow .num, .rot { margin-left: 12px; width: 123px; }
.prow .num { border-radius: 0; }
.prow:first-child .num { border-radius: 5px 0 0 0; }
.prow:last-child .num { border-radius: 0 0 0 5px; }
.prow .seg { width: 26px; }
.sel.rot { border: 0; }
.rot select { padding: 0 18px 1px 9px; height: 24px; }
.dot { width: 6px; height: 6px; border-radius: 3px; background: #e6e6e6; margin-left: 11px; }
.sub { display: flex; align-items: center; gap: 2px; height: 31px; margin-top: 11px; padding-left: 24px; }
.vscroll { width: 5px; height: 595px; margin: 2px 1px 0 0; border-radius: 3px; background: #424242; }

.status { display: flex; align-items: center; height: 26px; flex: none; padding: 0 14px 2px 11px; color: #8c8c8c; }
.hint { display: flex; align-items: center; gap: 2px; margin-right: 13px; }
.hint svg { fill: none; stroke: #8c8c8c; }
.hint .f { fill: #8c8c8c; stroke: none; }
.bar { width: 1px; height: 18px; background: #777; margin: 0 7px 0 11px; }
.desktop { height: 3px; flex: none; background: linear-gradient(90deg, #e6dcd4, #f0ddd4 45%, #f7eaf0 47%, #f7eaf0 50%, #f0ddd8 51%, #dfe3b8 77%, #f0e0d6 85%, #f0e0d6); }
</style>
